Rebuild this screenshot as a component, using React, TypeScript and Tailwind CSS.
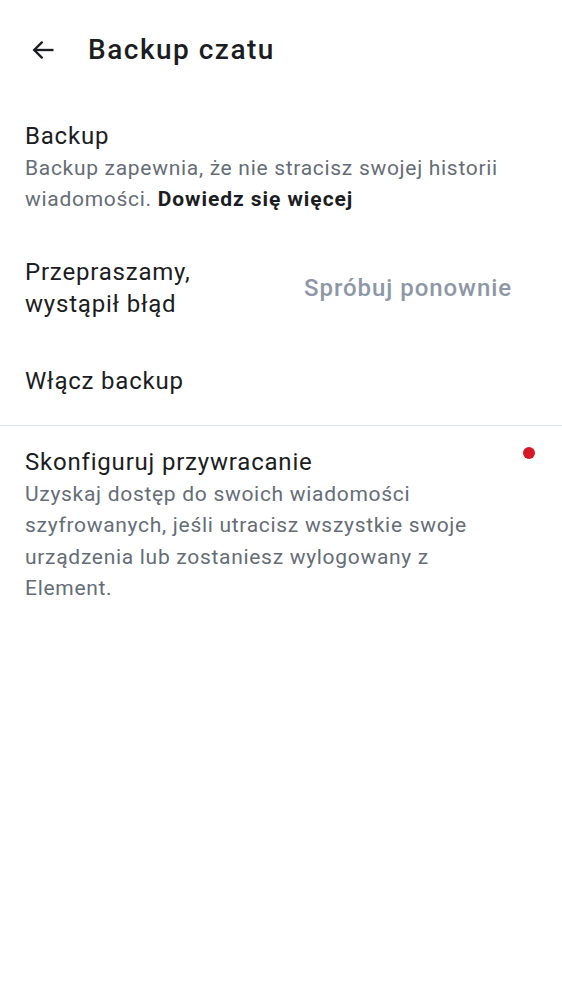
import React from "react";

export default function App() {
  return (
    <div className="w-[562px] h-[1000px] bg-white text-[#1b1d22]" style={{ fontFamily: "Roboto, 'Noto Sans', sans-serif" }}>
      <div className="h-[100px] flex items-center">
        <div className="w-[88px] flex items-center pl-[29px]">
          <svg width="28" height="28" viewBox="0 0 24 24" fill="none" stroke="#1b1d22" strokeWidth="2" strokeLinecap="square">
            <path d="M20 12H5" />
            <path d="M11 5.5L4.5 12L11 18.5" strokeLinecap="round" strokeLinejoin="miter" />
          </svg>
        </div>
        <div className="text-[28px] font-medium leading-[36px] tracking-[1.5px] text-[#1b1d22]">Backup czatu</div>
      </div>

      <div className="px-[25px] pt-[20px] pr-[40px]">
        <div className="text-[24px] leading-[32px] tracking-[0.8px]">Backup</div>
        <div className="mt-[1px] text-[21px] leading-[31px] tracking-[0.7px] text-[#656d77]">
          Backup zapewnia, że nie stracisz swojej historii wiadomości.{" "}
          <span className="font-bold tracking-[0.95px] text-[#1b1d22]">Dowiedz się więcej</span>
        </div>
      </div>

      <div className="px-[25px] pt-[41px] flex items-center">
        <div className="w-[270px] text-[24px] leading-[32px] tracking-[0.8px]">Przepraszamy,<br />wystąpił błąd</div>
        <div className="pl-[9px] text-[24px] font-medium leading-[32px] tracking-[0.95px] text-[#8d97a5]">Spróbuj ponownie</div>
      </div>

      <div className="px-[25px] pt-[45px] pb-[28px] text-[24px] leading-[32px] tracking-[0.8px]">Włącz backup</div>

      <div className="h-px bg-[#e3e8f0]" />

      <div className="relative px-[25px] pt-[20px]">
        <div className="text-[24px] leading-[32px] tracking-[0.8px]">Skonfiguruj przywracanie</div>
        <div className="mt-[1px] text-[21px] leading-[31.3px] tracking-[0.7px] text-[#656d77] pr-[60px]">
          Uzyskaj dostęp do swoich wiadomości szyfrowanych, jeśli utracisz wszystkie swoje urządzenia lub zostaniesz wylogowany z Element.
        </div>
        <div className="absolute right-[27px] top-[21px] w-[12px] h-[12px] rounded-full bg-[#d51928]" />
      </div>
    </div>
  );
}
